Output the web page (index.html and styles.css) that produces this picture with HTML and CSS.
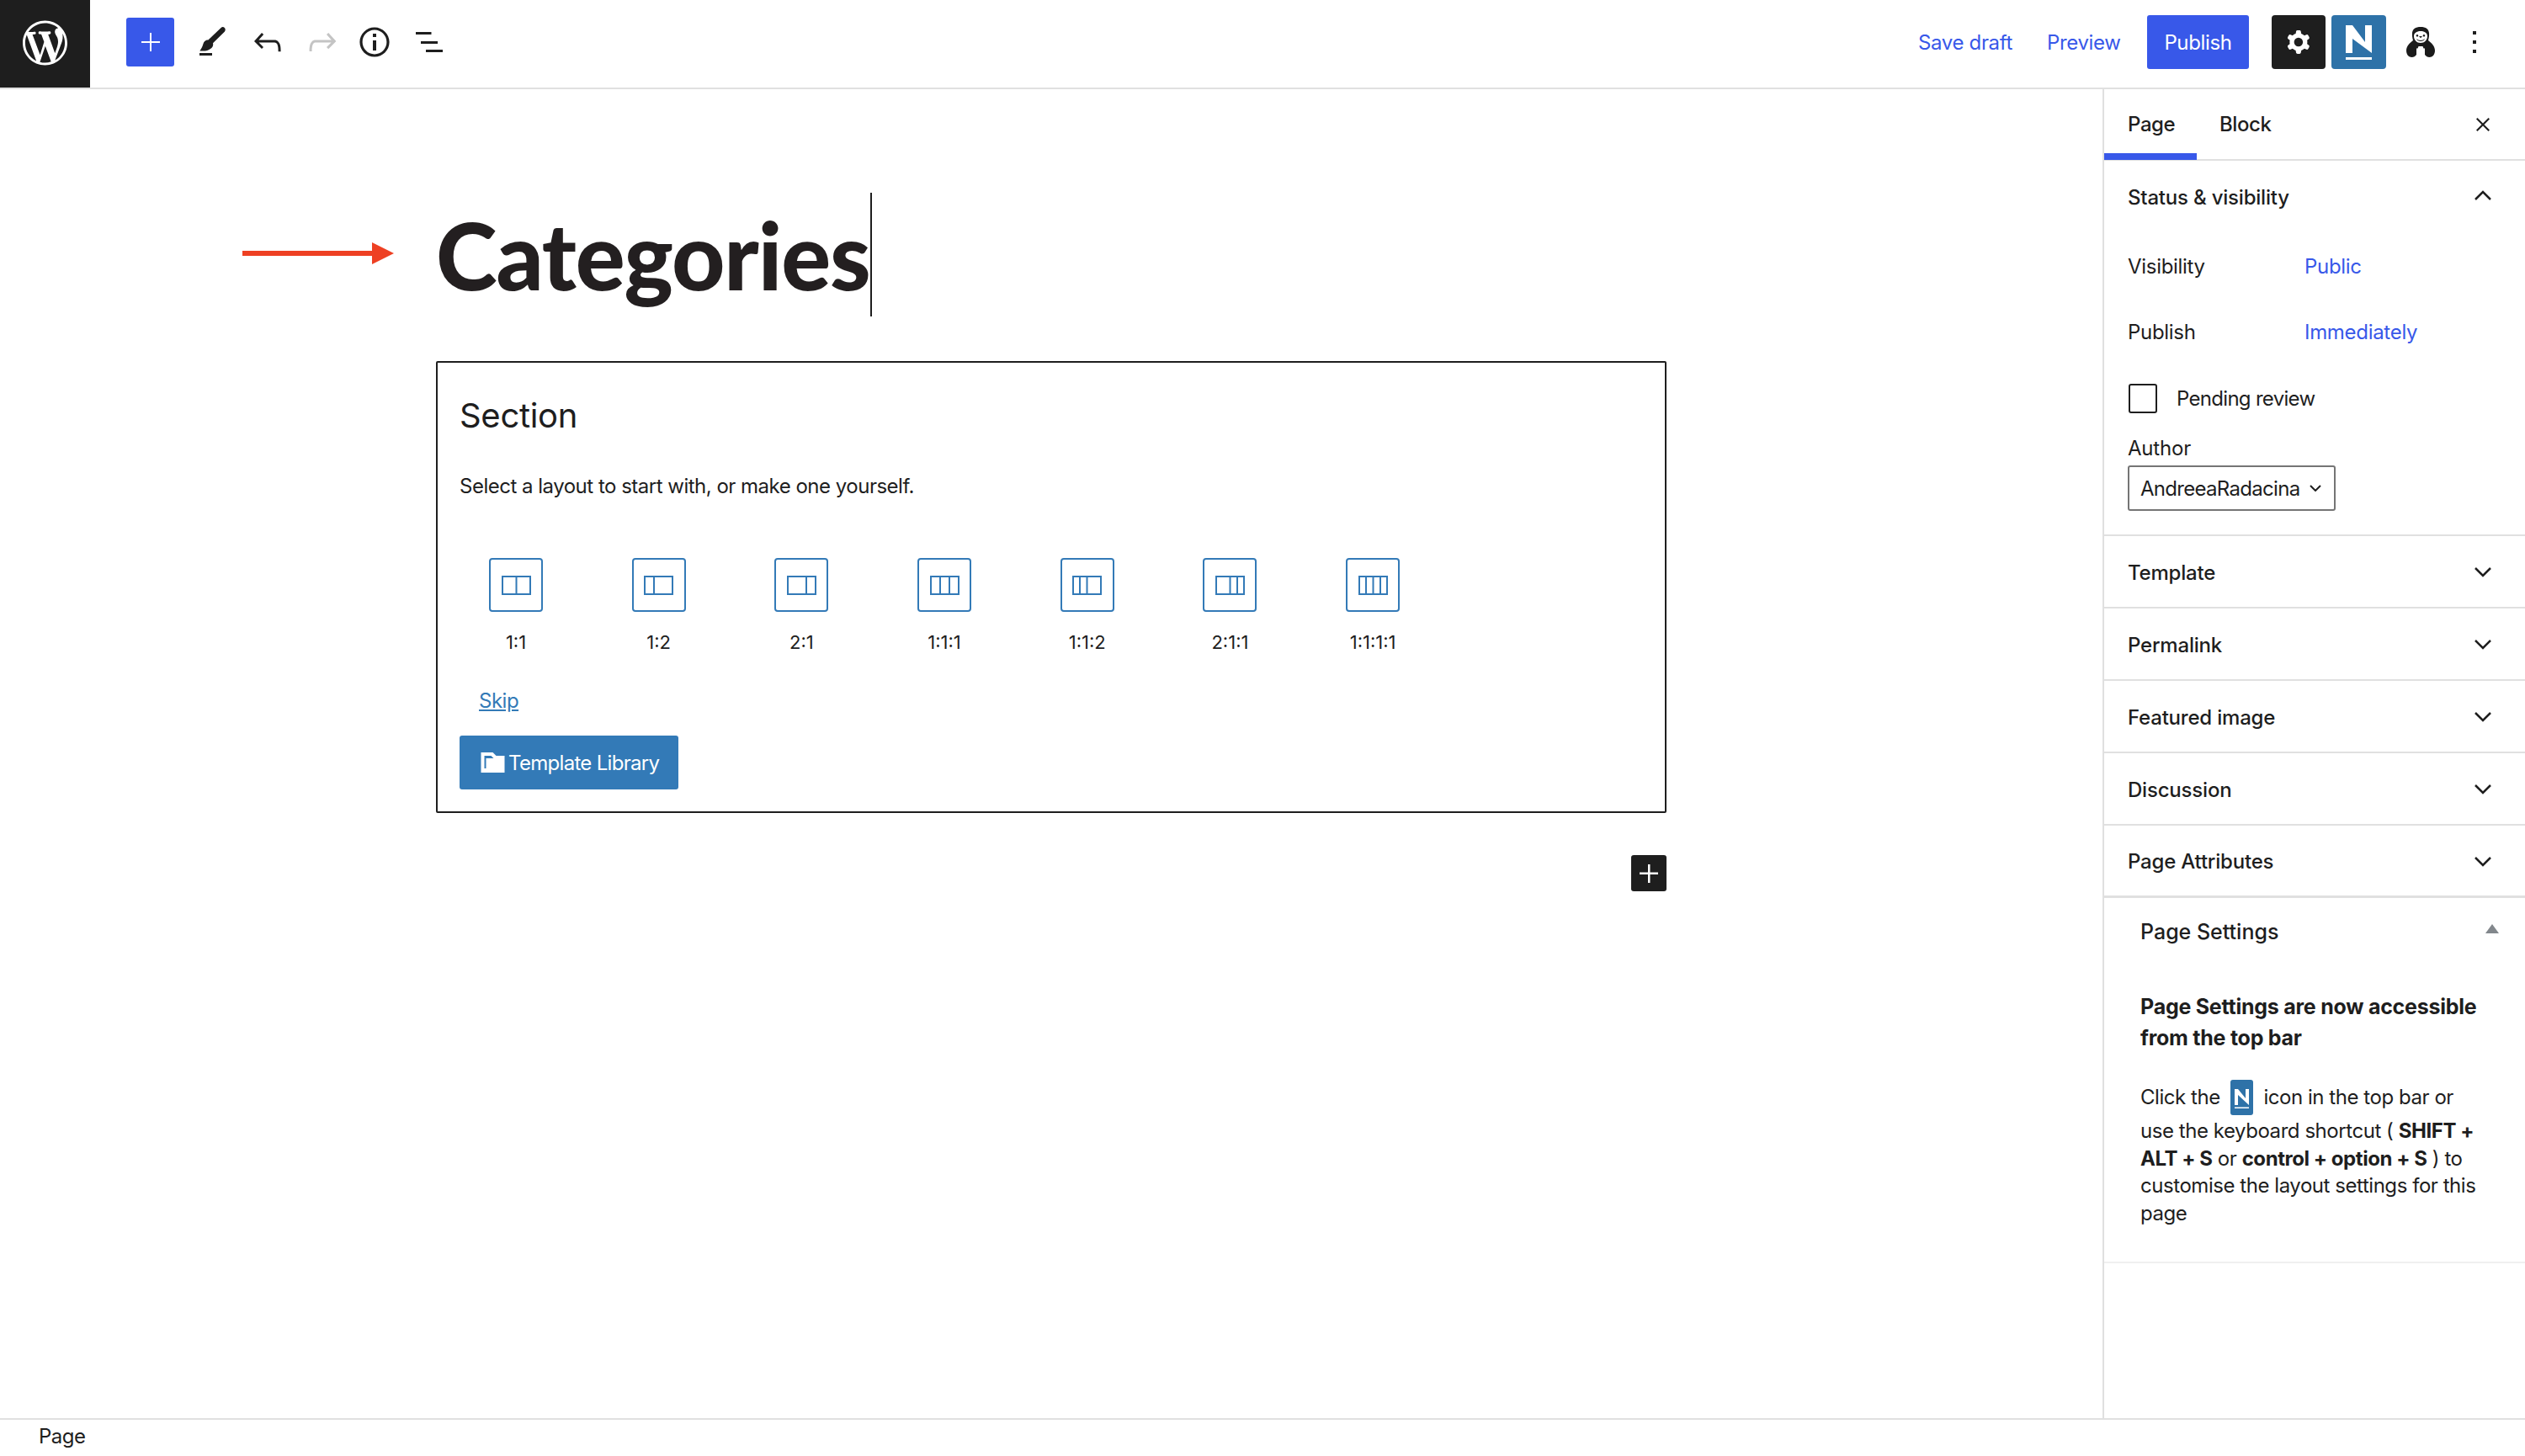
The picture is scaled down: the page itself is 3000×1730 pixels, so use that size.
FILE: index.html
```html
<!DOCTYPE html>
<html lang="en">
<head>
<meta charset="utf-8">
<title>Edit Page</title>
<link rel="stylesheet" href="styles.css">
</head>
<body>
<div class="app">
  <header class="topbar">
    <div class="wp-logo">
      <svg class="wp-glyph" viewBox="0 0 20 20"><path fill="#fff" d="M20 10c0-5.51-4.49-10-10-10C4.48 0 0 4.49 0 10c0 5.52 4.48 10 10 10 5.51 0 10-4.48 10-10zM7.78 15.37L4.37 6.22c.55-.02 1.17-.08 1.17-.08.5-.06.44-1.13-.06-1.11 0 0-1.45.11-2.37.11-.18 0-.37 0-.58-.01C4.12 2.69 6.87 1.11 10 1.11c2.33 0 4.45.87 6.05 2.34-.68-.11-1.65.39-1.65 1.58 0 .74.45 1.36.9 2.1.35.61.55 1.36.55 2.46 0 1.49-1.4 5-1.4 5l-3.03-8.37c.54-.02.82-.17.82-.17.5-.05.44-1.25-.06-1.22 0 0-1.44.12-2.38.12-.87 0-2.33-.12-2.33-.12-.5-.03-.56 1.2-.06 1.22l.92.08 1.26 3.41zM17.41 10c.24-.64.74-1.87.43-4.25.7 1.29 1.05 2.71 1.05 4.25 0 3.29-1.73 6.24-4.4 7.78.97-2.59 1.94-5.2 2.92-7.78zM6.1 18.09C3.12 16.65 1.11 13.53 1.11 10c0-1.3.23-2.48.72-3.59C3.25 10.3 4.67 14.2 6.1 18.09zm4.03-6.63l2.58 6.98c-.86.29-1.76.45-2.71.45-.79 0-1.57-.11-2.29-.33.81-2.38 1.62-4.74 2.42-7.1z"/></svg>
    </div>
    <div class="add-btn">
      <svg class="plus-icon" viewBox="0 0 22 22"><path fill="#fff" d="M10 0h2v10h10v2H12v10h-2V12H0v-2h10z"/></svg>
    </div>
    <div class="tools">
      <svg class="tool-icon" viewBox="0 0 24 24"><path fill="#1e1e1e" d="M4 20h7.5v-1.5H4zM16.8 3.5c.6-.6 1.5-.6 2.1 0 .6.6.6 1.6.1 2.2L12 12.6c.3 1.3-.1 2.4-1.3 3.3C9.4 16.9 8 17.3 6 17.3H4.2l.6-1.1c.4-.7.9-1.3 1.4-3.1.4-1.5 1.4-2 1.9-2.2.4-.1.7-.2 1.1-.1z"/></svg>
      <svg class="tool-icon undo" viewBox="0 0 24 24"><path fill="#1e1e1e" d="M18.3 11.7c-.6-.6-1.4-.9-2.3-.9H6.7l2.9-3.3-1.1-1-4.5 5L8.5 16l1-1-2.7-2.700H16c.5 0 .9.2 1.3.5 1 1 1 3.4 1 4.5v.3h1.500v-.2c0-1.500 0-4.300-1.500-5.700z"/></svg>
      <svg class="tool-icon" viewBox="0 0 24 24"><path fill="#c4c4c4" d="M15.6 6.5l-1.1 1 2.9 3.3H8c-.9 0-1.7.3-2.3.9-1.4 1.5-1.4 4.2-1.4 5.6v.2h1.5v-.3c0-1.1 0-3.5 1-4.5.3-.3.7-.5 1.3-.5h9.2L14.5 15l1.1 1.1 4.6-4.6-4.6-5z"/></svg>
      <svg class="tool-icon info" viewBox="0 0 24 24"><path fill="#1e1e1e" d="M12 3.2c-4.8 0-8.8 3.9-8.8 8.8 0 4.8 3.9 8.8 8.8 8.8 4.8 0 8.8-3.9 8.8-8.8 0-4.8-4-8.8-8.8-8.8zm0 16c-4 0-7.2-3.3-7.2-7.2C4.8 8 8 4.8 12 4.8s7.2 3.3 7.2 7.2c0 4-3.2 7.2-7.2 7.2zM11 17h2v-6h-2v6zm0-8h2V7h-2v2z"/></svg>
      <svg class="tool-icon" viewBox="0 0 48 48"><path fill="#1e1e1e" d="M8 12h18.500v3H8zM14 23h20v3H14zM20 33h20v3H20z"/></svg>
    </div>
    <div class="top-actions">
      <span class="top-link save-link">Save draft</span>
      <span class="top-link preview-link">Preview</span>
      <span class="publish-btn">Publish</span>
      <span class="square-btn gear-btn">
        <svg class="gear-icon" viewBox="0 0 24 24"><path fill="#fff" fill-rule="evenodd" d="M10.289 4.836A1 1 0 0111.275 4h1.306a1 1 0 01.987.836l.244 1.466c.787.26 1.503.679 2.108 1.218l1.393-.522a1 1 0 011.216.437l.653 1.13a1 1 0 01-.23 1.273l-1.148.944a6.025 6.025 0 010 2.435l1.149.946a1 1 0 01.23 1.272l-.653 1.13a1 1 0 01-1.216.437l-1.394-.522c-.605.54-1.32.958-2.108 1.218l-.244 1.466a1 1 0 01-.987.836h-1.306a1 1 0 01-.986-.836l-.244-1.466a5.995 5.995 0 01-2.108-1.218l-1.394.522a1 1 0 01-1.217-.436l-.653-1.131a1 1 0 01.23-1.272l1.149-.946a6.026 6.026 0 010-2.435l-1.148-.944a1 1 0 01-.23-1.272l.653-1.131a1 1 0 011.217-.437l1.393.522a5.994 5.994 0 012.108-1.218l.244-1.466zM14.929 12a3 3 0 11-6 0 3 3 0 016 0z"/></svg>
      </span>
      <svg class="n-logo" viewBox="0 0 65 64"><rect width="65" height="64" rx="4" fill="#2e72a8"/><path fill="#fff" d="M17 12h8l15 20V12h8v33L25 28v17h-8zM17 50h31v3H17z"/></svg>
      <svg class="otter" viewBox="0 0 34 36">
        <path fill="#1b1b1b" d="M17 0c6 0 9.500 2.500 10 7 .3 3-.2 6-1 9 4 3 8 7 8 12 0 5-3 8-6.500 8-2.500 0-4-1-5.500-3H12c-1.500 2-3 3-5.500 3C3 36 0 33 0 28c0-5 4-9 8-12-.8-3-1.300-6-1-9C7.500 2.500 11 0 17 0z"/>
        <path fill="#fff" d="M17 5c5 0 8 2.500 8 6 0 4.500-3.500 8-8 8s-8-3.500-8-8c0-3.500 3-6 8-6zM14.500 23h5l1 2.500h1.500V36H12V25.500h1.500z"/>
        <path fill="#1b1b1b" d="M13 9a1.300 1.300 0 1 1-.1 0zM21 9a1.300 1.300 0 1 1-.1 0zM15 11h4l-2 2.200zM12 14c2.500 2.500 7.500 2.500 10 0-1 4-9 4-10 0zM15 19.500h4L17 22.500z"/>
      </svg>
      <svg class="more-icon" viewBox="0 0 6 26"><path fill="#1e1e1e" d="M1 0h4v4H1zM1 11h4v4H1zM1 22h4v4H1z"/></svg>
    </div>
  </header>

  <div class="workspace">
    <main class="canvas">
      <div class="title-row">
        <svg class="arrow" viewBox="0 0 180 26"><path fill="#ee4023" d="M0 10h154V0l26 13-26 13V16H0z"/></svg>
        <h1 class="post-title">Categories</h1>
      </div>
      <div class="block-column">
        <section class="placeholder">
          <h2 class="placeholder-title">Section</h2>
          <p class="placeholder-text">Select a layout to start with, or make one yourself.</p>
          <ul class="layouts">
            <li class="layout"><span class="layout-box"><svg class="layout-icon" viewBox="0 0 35 23"><path d="M1 1h33v21H1zM17.500 1v21"/></svg></span><span class="layout-name">1:1</span></li>
            <li class="layout"><span class="layout-box"><svg class="layout-icon" viewBox="0 0 35 23"><path d="M1 1h33v21H1zM12 1v21"/></svg></span><span class="layout-name">1:2</span></li>
            <li class="layout"><span class="layout-box"><svg class="layout-icon" viewBox="0 0 35 23"><path d="M1 1h33v21H1zM23 1v21"/></svg></span><span class="layout-name">2:1</span></li>
            <li class="layout"><span class="layout-box"><svg class="layout-icon" viewBox="0 0 35 23"><path d="M1 1h33v21H1zM12 1v21M23 1v21"/></svg></span><span class="layout-name">1:1:1</span></li>
            <li class="layout"><span class="layout-box"><svg class="layout-icon" viewBox="0 0 35 23"><path d="M1 1h33v21H1zM9 1v21M17.500 1v21"/></svg></span><span class="layout-name">1:1:2</span></li>
            <li class="layout"><span class="layout-box"><svg class="layout-icon" viewBox="0 0 35 23"><path d="M1 1h33v21H1zM17.500 1v21M26 1v21"/></svg></span><span class="layout-name">2:1:1</span></li>
            <li class="layout"><span class="layout-box"><svg class="layout-icon" viewBox="0 0 35 23"><path d="M1 1h33v21H1zM9 1v21M17.500 1v21M26 1v21"/></svg></span><span class="layout-name">1:1:1:1</span></li>
          </ul>
          <a class="skip" href="#">Skip</a>
          <div class="library-btn">
            <svg class="folder" viewBox="0 0 28 24"><path fill="#fff" d="M0 0h14l4 4h10v20H0zM4 4v15h2V7h9l-3-3z"/></svg>
            <span>Template Library</span>
          </div>
        </section>
        <div class="block-add">
          <svg class="block-add-icon" viewBox="0 0 22 22"><path fill="#fff" d="M10 0h2.500v9.500H22V12h-9.500v10H10V12H0V9.500h10z"/></svg>
        </div>
      </div>
    </main>

    <aside class="sidebar">
      <div class="tabs">
        <span class="tab tab-active">Page</span>
        <span class="tab tab-block">Block</span>
        <svg class="close" viewBox="0 0 16 16"><path fill="#1e1e1e" d="M1.500 0 8 6.500 14.500 0 16 1.500 9.500 8l6.500 6.500-1.500 1.500L8 9.500 1.500 16 0 14.500 6.500 8 0 1.500z"/></svg>
      </div>
      <section class="panel panel-open">
        <div class="panel-head">
          <span>Status &amp; visibility</span>
          <svg class="chev chev-up" viewBox="0 0 20 12"><path fill="none" stroke="#1e1e1e" stroke-width="2.500" d="M1 11l9-9 9 9"/></svg>
        </div>
        <div class="meta-row"><span class="meta-label">Visibility</span><span class="meta-value">Public</span></div>
        <div class="meta-row"><span class="meta-label">Publish</span><span class="meta-value">Immediately</span></div>
        <div class="check-row"><span class="checkbox"></span><span>Pending review</span></div>
        <div class="author-label">Author</div>
        <div class="author-select">
          <span>AndreeaRadacina</span>
          <svg class="select-chev" viewBox="0 0 14 8"><path fill="none" stroke="#1e1e1e" stroke-width="2" d="M1 1l6 6 6-6"/></svg>
        </div>
      </section>
      <div class="panel panel-head panel-closed"><span>Template</span><svg class="chev" viewBox="0 0 20 12"><path fill="none" stroke="#1e1e1e" stroke-width="2.500" d="M1 1l9 9 9-9"/></svg></div>
      <div class="panel panel-head panel-closed"><span>Permalink</span><svg class="chev" viewBox="0 0 20 12"><path fill="none" stroke="#1e1e1e" stroke-width="2.500" d="M1 1l9 9 9-9"/></svg></div>
      <div class="panel panel-head panel-closed"><span>Featured image</span><svg class="chev" viewBox="0 0 20 12"><path fill="none" stroke="#1e1e1e" stroke-width="2.500" d="M1 1l9 9 9-9"/></svg></div>
      <div class="panel panel-head panel-closed"><span>Discussion</span><svg class="chev" viewBox="0 0 20 12"><path fill="none" stroke="#1e1e1e" stroke-width="2.500" d="M1 1l9 9 9-9"/></svg></div>
      <div class="panel panel-head panel-closed panel-last"><span>Page Attributes</span><svg class="chev" viewBox="0 0 20 12"><path fill="none" stroke="#1e1e1e" stroke-width="2.500" d="M1 1l9 9 9-9"/></svg></div>
      <section class="settings">
        <div class="settings-head">
          <span>Page Settings</span>
          <span class="triangle"></span>
        </div>
        <p class="settings-lead">Page Settings are now accessible from the top bar</p>
        <p class="settings-text">Click the <svg class="n-inline" viewBox="0 0 27 42"><rect width="27" height="42" rx="3" fill="#2e72a8"/><path fill="#fff" d="M5 11h4l9 11V11h4v19L9 18v12H5zM5 32.500h17v1.500H5z"/></svg> icon in the top bar or use the keyboard shortcut ( <b>SHIFT + ALT + S</b> or <b>control + option + S</b> ) to customise the layout settings for this page</p>
      </section>
    </aside>
  </div>

  <footer class="statusbar">Page</footer>
</div>
</body>
</html>
```

FILE: styles.css
```css
* { box-sizing: border-box; }
html, body { margin: 0; padding: 0; background: #fff; }
body {
  font-family: Inter, "Liberation Sans", sans-serif;
  font-size: 24px;
  color: #1e1e1e;
}
.app {
  display: grid;
  grid-template-rows: 106px 1fr 45px;
  height: 1730px;
  width: 3000px;
  overflow: hidden;
}

/* top bar */
.topbar {
  display: flex;
  align-items: flex-start;
  border-bottom: 2px solid #e0e0e0;
}
.wp-logo {
  width: 107px;
  height: 104px;
  background: #1e1e1e;
  display: flex;
  padding: 24px 0 0 27px;
}
.wp-glyph { width: 53px; height: 54px; }
.add-btn {
  width: 57px;
  height: 58px;
  margin: 21px 0 0 43px;
  background: #3858e9;
  border-radius: 3px;
  display: flex;
  align-items: center;
  justify-content: center;
}
.plus-icon { width: 22px; height: 22px; }
.tools {
  display: flex;
  gap: 17px;
  margin: 26px 0 0 22px;
}
.tool-icon { width: 48px; height: 48px; display: block; }
.info { margin-left: -3px; }
.top-actions {
  margin-left: auto;
  display: flex;
  align-items: center;
  height: 100px;
  font-size: 24px;
  letter-spacing: -0.35px;
}
.top-link { color: #3858e9; }
.save-link { width: 153px; }
.preview-link { width: 119px; }
.publish-btn {
  width: 121px;
  height: 64px;
  background: #3858e9;
  color: #fff;
  border-radius: 3px;
  display: flex;
  align-items: center;
  justify-content: center;
  margin-right: 27px;
}
.square-btn {
  width: 64px;
  height: 64px;
  border-radius: 4px;
  display: flex;
  align-items: center;
  justify-content: center;
}
.gear-btn { background: #1e1e1e; margin-right: 7px; }
.gear-icon { width: 42px; height: 42px; }
.n-logo { width: 65px; height: 64px; margin-right: 24px; }
.otter { width: 34px; height: 36px; margin-right: 44px; }
.more-icon { width: 6px; height: 26px; margin-right: 57px; }

/* canvas */
.workspace { display: flex; min-height: 0; }
.canvas {
  flex: 1;
  padding: 123px 0 0 288px;
}
.title-row { display: flex; align-items: flex-start; }
.arrow { width: 180px; height: 26px; margin: 59px 50px 0 0; flex: none; }
.post-title {
  margin: 0;
  height: 147px;
  border-right: 2px solid #1e1e1e;
  font-family: Lato, "Open Sans", sans-serif;
  font-weight: 900;
  font-size: 110px;
  letter-spacing: -1.1px;
  line-height: 147px;
  color: #231f20;
}
.block-column {
  width: 1462px;
  margin: 53px 0 0 230px;
  display: flex;
  flex-direction: column;
}
.placeholder {
  border: 2px solid #1e1e1e;
  border-radius: 2px;
  padding: 39px 26px 26px;
  height: 537px;
}
.placeholder-title {
  margin: 0;
  font-size: 40px;
  font-weight: 400;
  letter-spacing: -0.3px;
  line-height: 48px;
}
.placeholder-text {
  margin: 42px 0 0;
  font-size: 24px;
  letter-spacing: -0.5px;
  line-height: 36px;
}
.layouts {
  list-style: none;
  display: flex;
  gap: 35.7px;
  margin: 67px 0 0;
  padding: 0;
}
.layout {
  width: 134px;
  display: flex;
  flex-direction: column;
  align-items: center;
}
.layout-box {
  width: 64px;
  height: 64px;
  border: 2px solid #337ab7;
  border-radius: 4px;
  display: flex;
  align-items: center;
  justify-content: center;
}
.layout-icon {
  width: 35px;
  height: 23px;
  fill: none;
  stroke: #337ab7;
  stroke-width: 2;
}
.layout-name {
  margin-top: 22px;
  font-size: 22px;
  line-height: 28px;
}
.skip {
  display: block;
  width: max-content;
  margin: 41px 0 0 23px;
  font-size: 24px;
  letter-spacing: -0.5px;
  line-height: 30px;
  color: #337ab7;
  text-decoration: underline;
}
.library-btn {
  width: 260px;
  height: 64px;
  margin-top: 26px;
  background: #337ab7;
  border-radius: 3px;
  color: #fff;
  font-size: 24px;
  letter-spacing: -0.7px;
  display: flex;
  align-items: center;
  gap: 4px;
  padding-left: 25px;
}
.folder { width: 29px; height: 24px; flex: none; }
.block-add {
  align-self: flex-end;
  width: 42px;
  height: 43px;
  margin-top: 50px;
  background: #1e1e1e;
  border-radius: 3px;
  display: flex;
  align-items: center;
  justify-content: center;
}
.block-add-icon { width: 22px; height: 22px; }

/* sidebar */
.sidebar {
  width: 502px;
  flex: none;
  border-left: 2px solid #e0e0e0;
  letter-spacing: -0.2px;
}
.tabs {
  height: 85px;
  border-bottom: 2px solid #e0e0e0;
  display: flex;
  align-items: center;
}
.tab {
  height: 85px;
  display: flex;
  align-items: center;
  padding: 0 28px;
  font-weight: 500;
  letter-spacing: -0.4px;
}
.tab-block { padding-left: 27px; }
.tab-active {
  box-shadow: inset 0 -8px 0 #3858e9;
  width: 110px;
}
.close { width: 16px; height: 16px; margin-left: auto; margin-right: 42px; }
.panel { border-bottom: 2px solid #e0e0e0; }
.panel-open { height: 446px; }
.panel-head {
  display: flex;
  align-items: center;
  justify-content: space-between;
  padding: 0 40px 0 28px;
  height: 86px;
  font-weight: 500;
}
.panel-closed { padding-top: 2px; }
.chev { width: 20px; height: 12px; }
.chev-up { margin-top: -4px; }
.meta-row {
  display: flex;
  align-items: center;
  height: 78px;
  padding-left: 28px;
  letter-spacing: -0.3px;
}
.meta-label { width: 210px; }
.meta-value { color: #3858e9; }
.check-row {
  display: flex;
  align-items: center;
  gap: 23px;
  margin: 23px 0 0 29px;
  height: 35px;
  letter-spacing: -0.7px;
}
.checkbox {
  width: 34px;
  height: 35px;
  border: 2px solid #1e1e1e;
  border-radius: 3px;
}
.author-label {
  margin: 27px 0 0 28px;
  line-height: 30px;
}
.author-select {
  width: 247px;
  height: 54px;
  margin: 5px 0 0 28px;
  border: 2px solid #757575;
  border-radius: 3px;
  display: flex;
  align-items: center;
  justify-content: space-between;
  padding: 0 15px 0 13px;
  letter-spacing: -0.7px;
}
.select-chev { width: 14px; height: 8px; }
.panel-last { border-bottom-width: 3px; }
.settings { border-bottom: 2px solid #f0f0f0; padding: 0 42px 41px 43px; }
.settings-head {
  height: 80px;
  display: flex;
  align-items: center;
  justify-content: space-between;
  font-weight: 500;
  font-size: 25px;
  letter-spacing: 0;
}
.triangle {
  width: 0;
  height: 0;
  border-left: 8px solid transparent;
  border-right: 8px solid transparent;
  border-bottom: 11px solid #82878c;
  margin-top: -8px;
  margin-right: -11px;
}
.settings-lead {
  margin: 31px 0 0;
  font-size: 25px;
  letter-spacing: -0.25px;
  line-height: 37px;
  font-weight: 700;
}
.settings-text {
  margin: 31px 0 0;
  font-size: 24px;
  letter-spacing: -0.45px;
  line-height: 32.5px;
}
.settings-text b { font-weight: 700; }
.n-inline {
  width: 27px;
  height: 42px;
  vertical-align: middle;
  margin: 0 6px 3px;
}
.statusbar {
  border-top: 2px solid #e0e0e0;
  padding-left: 46px;
  line-height: 40px;
  font-size: 24px;
  letter-spacing: -0.5px;
}
```
